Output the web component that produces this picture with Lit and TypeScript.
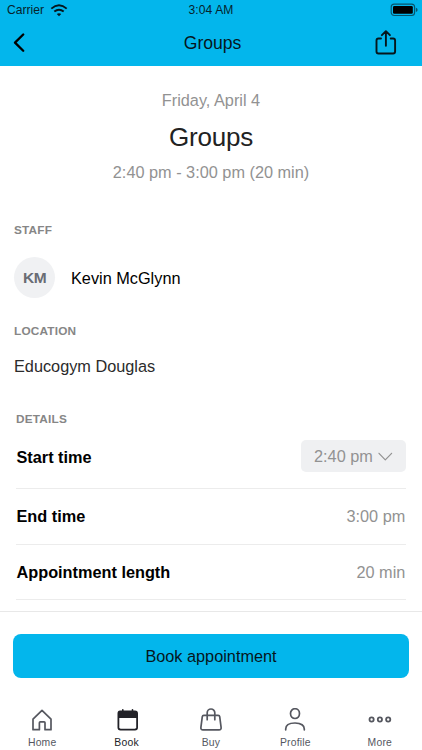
import { LitElement, html, css, svg } from "lit";
import { customElement } from "lit/decorators.js";
import { classMap } from "lit/directives/class-map.js";

const home = svg`<path d="M7 21.700V11.200L16 2.300l9 8.900V21.700H19V14.800q0-.9-.9-.9H14.300q-.9 0-.9.9V21.700Z" fill="none" stroke="currentColor" stroke-width="1.7" stroke-linejoin="round"/>`;
const calendar = svg`<path d="M9 2.600H11V1.800q0-.8.8-.8t.8.800V2.600H20.700V1.800q0-.8.8-.8t.8.800V2.600H24Q27 2.600 27 5.600V19.500Q27 22.500 24 22.500H9.500Q6.500 22.500 6.500 19.500V5.600Q6.500 2.600 9 2.600Z" fill="currentColor"/><path d="M8.300 10h16.900v9.300q0 1.400-1.400 1.400H9.700q-1.400 0-1.400-1.400Z" fill="#fff"/>`;
const bag = svg`<path d="M8.800 7.400h14.400q1.300 0 1.500 1.300l1.400 10.600q.3 2.500-2.100 2.500H8q-2.400 0-2.100-2.500l1.400-10.600Q7.500 7.400 8.800 7.400ZM12.200 11.700V4.800a3.800 3.800 0 0 1 7.600 0V11.700" fill="none" stroke="currentColor" stroke-width="1.7" stroke-linecap="round"/>`;
const profile = svg`<ellipse cx="16" cy="5.600" rx="4.500" ry="4.900" fill="none" stroke="currentColor" stroke-width="1.700"/><path d="M6.700 21.800v-.8c0-3.500 3.200-6 9.300-6s9.300 2.500 9.300 6v.8" fill="none" stroke="currentColor" stroke-width="1.700" stroke-linecap="round"/>`;
const more = svg`<g fill="none" stroke="currentColor" stroke-width="1.800"><circle cx="7.600" cy="11.500" r="2.100"/><circle cx="15.900" cy="11.500" r="2.100"/><circle cx="24.200" cy="11.500" r="2.100"/></g>`;

const tabs = [
  { label: "Home", icon: home },
  { label: "Book", icon: calendar, active: true },
  { label: "Buy", icon: bag },
  { label: "Profile", icon: profile },
  { label: "More", icon: more },
];

@customElement("app-root")
export class AppRoot extends LitElement {
  static styles = css`
    :host {
      display: flex;
      flex-direction: column;
      height: 750px;
      width: 100%;
      overflow: hidden;
      background: #fff;
      color: #000;
      font: 16.3px "Liberation Sans", Arial, sans-serif;
      white-space: nowrap;
    }
    * { box-sizing: border-box; }
    svg { display: block; flex: none; }
    .top { height: 66px; background: #03b6ec; flex: none; }
    .status {
      height: 20px;
      display: grid;
      grid-template-columns: 1fr auto 1fr;
      align-items: center;
      padding: 0 4px 0 7px;
      font-size: 12.1px;
      color: #06232d;
    }
    .carrier { display: flex; align-items: center; gap: 6px; }
    .clock { margin-left: -3px; letter-spacing: 0.100px; }
    .battery { justify-self: end; }
    .bar {
      height: 46px;
      display: grid;
      grid-template-columns: 1fr auto 1fr;
      align-items: center;
      padding: 0 24px 0 12px;
    }
    .title { font-size: 17.6px; letter-spacing: -0.050px; color: #06161c; padding-left: 15px; }
    .share { justify-self: end; }
    .summary {
      display: flex;
      flex-direction: column;
      align-items: center;
      padding-top: 24px;
      color: #929292;
    }
    .line { height: 20px; line-height: 20px; }
    .name { height: 52px; line-height: 54px; font-size: 26px; letter-spacing: -0.200px; color: #222; }
    .label {
      height: 16px;
      line-height: 16px;
      font-size: 11.800px;
      font-weight: 700;
      letter-spacing: 0.200px;
      color: #868686;
    }
    .people { padding: 40px 14px 0; }
    .staff { display: flex; align-items: center; height: 41px; gap: 16px; margin: 19px 0 25px; }
    .person { line-height: 20px; padding-top: 1px; }
    .avatar {
      width: 41px;
      height: 41px;
      border-radius: 50%;
      background: #f0f1f3;
      color: #696c74;
      font-size: 15.500px;
      letter-spacing: -0.500px;
      font-weight: 700;
      display: grid;
      place-items: center;
    }
    .place { height: 20px; line-height: 20px; margin-top: 17px; color: #2b2b2b; }
    .details { padding: 35px 16px 0; flex: none; }
    .row {
      height: 55.500px;
      display: flex;
      align-items: center;
      justify-content: space-between;
      border-bottom: 1px solid #ececec;
      color: #929292;
    }
    .row.first { height: 62px; align-items: flex-start; padding-top: 13px; }
    .key { color: #000; font-weight: 700; padding-left: 0.500px; }
    .row.last { padding-top: 1px; }
    .value { padding-right: 0.700px; }
    .first .key { line-height: 34px; }
    .pill {
      display: flex;
      align-items: center;
      gap: 5px;
      width: 105px;
      height: 32px;
      padding-left: 13px;
      border-radius: 5px;
      background: #eff0f2;
    }
    .footer { margin-top: 11px; border-top: 1px solid #e8e8e8; padding: 22px 13px 0; flex: none; }
    .book {
      display: block;
      width: 100%;
      height: 44px;
      padding: 0;
      border: 0;
      border-radius: 8px;
      background: #03b6ec;
      color: #06161c;
      font: inherit;
    }
    .tabs { display: grid; grid-template-columns: repeat(5, 1fr); padding-top: 30px; }
    .tab {
      display: flex;
      flex-direction: column;
      align-items: center;
      gap: 4px;
      color: #55575f;
      font-size: 10.400px;
      letter-spacing: 0.200px;
      line-height: 13px;
    }
    .tab.active { color: #222228; }
  `;

  render() {
    return html`
      <header class="top">
        <div class="status">
          <div class="carrier">
            <span>Carrier</span>
            <svg width="18" height="13" viewBox="0 0 18 13" fill="none" stroke="#06161c" stroke-width="1.900">
              <path d="M1.300 4.600Q9-2.300 16.700 4.600M4.300 7.600q4.700-3.900 9.400 0" />
              <path d="M9 12.200 6.800 10q2.200-1.700 4.400 0Z" fill="#06161c" stroke="none" />
            </svg>
          </div>
          <span class="clock">3:04 AM</span>
          <svg class="battery" width="28" height="14" viewBox="0 0 28 14">
            <rect x="1.200" y="1.100" width="23.400" height="11.400" rx="3" fill="none" stroke="#07546b" stroke-width="1.100" />
            <rect x="3" y="2.900" width="19.800" height="7.800" rx="1.300" fill="#000" />
            <path d="M25.900 4.800q1.700.5 1.700 2.100t-1.700 2.100Z" fill="#07546b" />
          </svg>
        </div>
        <div class="bar">
          <svg width="14" height="20" viewBox="0 0 14 20">
            <path d="M11.200 1.500 3 9.600l8.200 8.200" fill="none" stroke="#000" stroke-width="2.300" stroke-linecap="round" stroke-linejoin="round" />
          </svg>
          <span class="title">Groups</span>
          <svg class="share" width="24" height="26" viewBox="0 0 24 26" fill="none" stroke="#06161c" stroke-width="1.900" stroke-linecap="round" stroke-linejoin="round">
            <path d="M7 8.500H4.500Q2.500 8.500 2.500 10.500V21.500q0 2 2 2H19.100q2 0 2-2V10.500q0-2-2-2H16.700M11.900 15.800V1.500M7.900 5.200 11.900 1.200 15.900 5.200" />
          </svg>
        </div>
      </header>

      <section class="summary">
        <div class="line">Friday, April 4</div>
        <div class="name">Groups</div>
        <div class="line">2:40 pm - 3:00 pm (20 min)</div>
      </section>

      <section class="people">
        <div class="label">STAFF</div>
        <div class="staff">
          <span class="avatar">KM</span>
          <span class="person">Kevin McGlynn</span>
        </div>
        <div class="label">LOCATION</div>
        <div class="place">Educogym Douglas</div>
      </section>

      <section class="details">
        <div class="label">DETAILS</div>
        <div class="row first">
          <span class="key">Start time</span>
          <span class="pill">
            <span>2:40 pm</span>
            <svg width="15" height="10" viewBox="0 0 15 10">
              <path d="M1 2.300 7.300 8.800 13.600 2.300" fill="none" stroke="#929292" stroke-width="1.200" stroke-linecap="round" stroke-linejoin="round" />
            </svg>
          </span>
        </div>
        <div class="row"><span class="key">End time</span><span class="value">3:00 pm</span></div>
        <div class="row last"><span class="key">Appointment length</span><span class="value">20 min</span></div>
      </section>

      <footer class="footer">
        <button class="book">Book appointment</button>
      </footer>
      <nav class="tabs">
        ${tabs.map(
          (t) => html`
            <div class=${classMap({ tab: true, active: !!t.active })}>
              <svg width="32" height="24" viewBox="0 0 32 24">${t.icon}</svg>
              <span>${t.label}</span>
            </div>
          `
        )}
      </nav>
    `;
  }
}
